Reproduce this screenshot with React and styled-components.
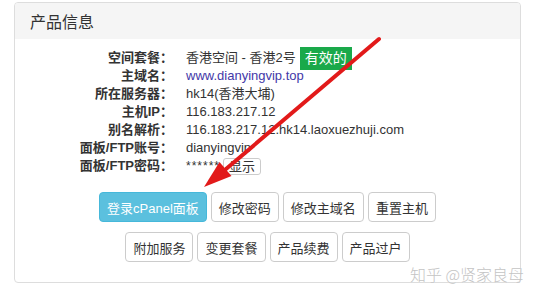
import React from 'react';
import styled, { createGlobalStyle } from 'styled-components';

/***************************************
  STYLES
***************************************/

const GlobalStyle = createGlobalStyle`
  html, body {
    margin: 0;
    padding: 0;
    background: #fff;
  }
  body {
    font-family: "Liberation Sans", "Noto Sans CJK SC", sans-serif;
    color: #333;
  }
  * { box-sizing: border-box; }
`;

const Page = styled.div`
  position: relative;
  width: 536px;
  height: 295px;
  padding: 2px 15px 0 14px;
  overflow: hidden;
`;

const Panel = styled.section`
  border: 1px solid #ddd;
  border-radius: 4px;
  background: #fff;
  overflow: hidden;
`;

const Heading = styled.header`
  height: 36px;
  padding: 0 15px;
  display: flex;
  align-items: center;
  background: #f5f5f5;
  font-family: "Noto Sans CJK SC", sans-serif;
  font-size: 16px;
  color: #333;
`;

const Body = styled.div`
  padding: 10px 0 20px;
`;

const InfoGrid = styled.dl`
  margin: 0;
  display: grid;
  grid-template-columns: 158px 1fr;
  column-gap: 13px;
  font-size: 13px;
  line-height: 18px;
`;

const Label = styled.dt`
  text-align: right;
  font-weight: bold;
  color: #333;
  white-space: nowrap;
`;

const Value = styled.dd`
  margin: 0;
  color: #333;
  white-space: nowrap;
`;

const Link = styled.a`
  color: #4338a8;
  text-decoration: none;
`;

const Badge = styled.span`
  display: inline-block;
  height: 23px;
  line-height: 23px;
  margin: -3px 0 -3px 4px;
  padding: 0 5px;
  vertical-align: middle;
  background: #1aa94a;
  color: #fff;
  font-size: 14px;
`;

const Stars = styled.span`
  letter-spacing: 1px;
  font-size: 12px;
`;

const SmallButton = styled.button`
  display: inline-block;
  height: 17px;
  margin: 0 0 0 3px;
  padding: 0 5px;
  vertical-align: middle;
  border: 1px solid #ccc;
  border-radius: 3px;
  background: #fff;
  color: #333;
  font: inherit;
  font-size: 13px;
  line-height: 15px;
`;

const Actions = styled.div`
  margin-top: 17px;
  display: flex;
  flex-direction: column;
  gap: 10px;
`;

const ButtonRow = styled.div`
  display: flex;
  justify-content: center;
  gap: 4px;
`;

const Button = styled.button`
  height: 30px;
  padding: 0 7px;
  border: 1px solid ${(p) => (p.$primary ? '#46b8da' : '#ccc')};
  border-radius: 4px;
  background: ${(p) => (p.$primary ? '#5bc0de' : '#fff')};
  color: ${(p) => (p.$primary ? '#fff' : '#333')};
  font-family: "Liberation Sans", "Noto Sans CJK SC", sans-serif;
  font-size: 13px;
  white-space: nowrap;
`;

const Watermark = styled.div`
  position: absolute;
  left: 410px;
  top: 262px;
  font-family: "Noto Sans CJK SC", sans-serif;
  font-weight: 300;
  font-size: 16px;
  color: #c4c4c4;
  text-shadow: 0 0 1px #fff;
  white-space: nowrap;
`;

const Overlay = styled.svg`
  position: absolute;
  left: 0;
  top: 0;
  pointer-events: none;
`;

/***************************************
  DATA
***************************************/

const rows = [
  ['空间套餐：', <>香港空间 - 香港2号<Badge>有效的</Badge></>],
  ['主域名：', <Link href="#">www.dianyingvip.top</Link>],
  ['所在服务器：', 'hk14(香港大埔)'],
  ['主机IP：', '116.183.217.12'],
  ['别名解析：', '116.183.217.12.hk14.laoxuezhuji.com'],
  ['面板/FTP账号：', 'dianyingvip'],
  ['面板/FTP密码：', <><Stars>******</Stars><SmallButton>显示</SmallButton></>],
];

const actionRows = [
  ['登录cPanel面板', '修改密码', '修改主域名', '重置主机'],
  ['附加服务', '变更套餐', '产品续费', '产品过户'],
];

/***************************************
  MAIN
***************************************/

const App = () => (
  <Page>
    <GlobalStyle />
    <Panel>
      <Heading>产品信息</Heading>
      <Body>
        <InfoGrid>
          {rows.map(([label, value]) => (
            <React.Fragment key={label}>
              <Label>{label}</Label>
              <Value>{value}</Value>
            </React.Fragment>
          ))}
        </InfoGrid>
        <Actions>
          {actionRows.map((row, i) => (
            <ButtonRow key={i}>
              {row.map((text) => (
                <Button key={text} $primary={text === '登录cPanel面板'}>{text}</Button>
              ))}
            </ButtonRow>
          ))}
        </Actions>
      </Body>
    </Panel>
    <Watermark>知乎 @贤家良母</Watermark>
    <Overlay width="536" height="295" viewBox="0 0 536 295">
      <line x1="379" y1="39" x2="226" y2="169" stroke="#e21a1a" strokeWidth="4" strokeLinecap="round" />
      <polygon points="204,187 231.5,176 219.5,162" fill="#e21a1a" />
    </Overlay>
  </Page>
);

export default App;
